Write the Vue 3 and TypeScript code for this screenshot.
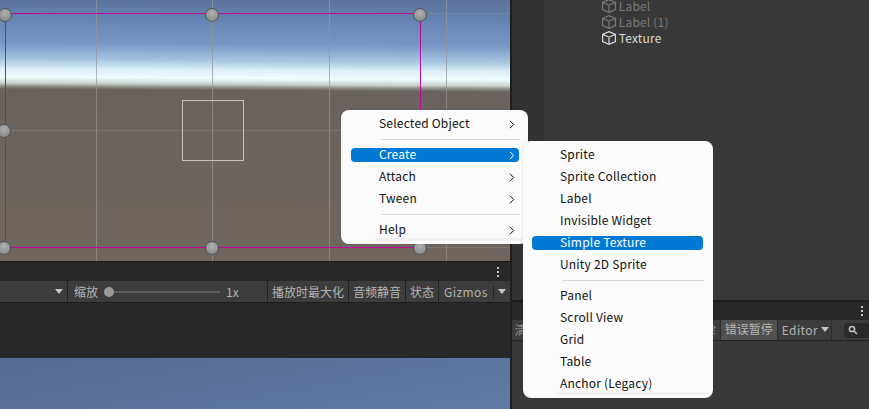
<script setup lang="ts">
type Entry = { label?: string; sep?: boolean; sub?: boolean; active?: boolean };

const mainMenu: Entry[] = [
  { label: 'Selected Object', sub: true },
  { sep: true },
  { label: 'Create', sub: true, active: true },
  { label: 'Attach', sub: true },
  { label: 'Tween', sub: true },
  { sep: true },
  { label: 'Help', sub: true },
];

const createMenu: Entry[] = [
  { label: 'Sprite' },
  { label: 'Sprite Collection' },
  { label: 'Label' },
  { label: 'Invisible Widget' },
  { label: 'Simple Texture', active: true },
  { label: 'Unity 2D Sprite' },
  { sep: true },
  { label: 'Panel' },
  { label: 'Scroll View' },
  { label: 'Grid' },
  { label: 'Table' },
  { label: 'Anchor (Legacy)' },
];

const gridX = [96, 212, 329, 446];
const gridY = [13, 130, 247];

const handles = [
  [5, 15], [212, 15], [420, 15],
  [4, 131], [420, 131],
  [4, 248], [212, 248], [420, 248],
];

const gameButtons = ['播放时最大化', '音频静音', '状态'];
const tree = [
  { name: 'Label', dim: true },
  { name: 'Label (1)', dim: true },
  { name: 'Texture', dim: false },
];
</script>

<template>
  <div class="editor">
    <section class="left">
      <div class="scene">
        <i v-for="x in gridX" :key="x" class="grid v" :style="{ left: x + 'px' }" />
        <i v-for="y in gridY" :key="y" class="grid h" :style="{ top: y + 'px' }" />
        <div class="rect" />
        <div class="square" />
        <i
          v-for="(h, i) in handles"
          :key="i"
          class="handle"
          :style="{ left: h[0] - 7 + 'px', top: h[1] - 7 + 'px' }"
        />
      </div>
      <div class="tabbar">
        <span class="dots"><b /><b /><b /></span>
      </div>
      <div class="toolbar">
        <div class="drop"><span class="caret" /></div>
        <div class="zoom">
          <span class="zoom-label">缩放</span>
          <span class="slider"><i /></span>
          <span class="zoom-val">1x</span>
        </div>
        <button v-for="b in gameButtons" :key="b" class="tool">{{ b }}</button>
        <button class="tool gizmos">Gizmos<em /><span class="caret" /></button>
      </div>
      <div class="gap" />
      <div class="game" />
    </section>

    <section class="right">
      <div class="hierarchy">
        <div class="gutter" />
        <ul class="tree">
          <li v-for="t in tree" :key="t.name" :class="{ dim: t.dim }">
            <svg width="16" height="16" viewBox="0 0 16 16" fill="none" stroke="currentColor" stroke-width="1.2">
              <path d="M8 1.6 14.4 4.4V11.6L8 14.4 1.6 11.6V4.4Z" />
              <path d="M1.6 4.4 8 7.2 14.4 4.4M8 7.2V14.4" />
            </svg>
            <span>{{ t.name }}</span>
          </li>
        </ul>
      </div>
      <div class="console-tabs">
        <span class="dots"><b /><b /><b /></span>
      </div>
      <div class="console-bar">
        <span class="cut first">清</span>
        <span class="cut second">除</span>
        <span class="pause">错误暂停</span>
        <span class="editor-btn">Editor<span class="caret" /></span>
        <span class="search">
          <svg width="10" height="10" viewBox="0 0 10 10" fill="none" stroke="#c4c4c4" stroke-width="1.5">
            <circle cx="4" cy="4" r="2.6" />
            <path d="M6 6 9 9" />
          </svg>
        </span>
      </div>
      <div class="console-body" />
    </section>

    <nav class="menu main">
      <template v-for="(e, i) in mainMenu" :key="i">
        <hr v-if="e.sep" />
        <div v-else class="item" :class="{ active: e.active }">
          <span>{{ e.label }}</span>
          <svg v-if="e.sub" width="6" height="9" viewBox="0 0 6 9" fill="none" stroke="currentColor" stroke-width="1">
            <path d="M1 .8 4.7 4.5 1 8.2" />
          </svg>
        </div>
      </template>
    </nav>

    <nav class="menu create">
      <template v-for="(e, i) in createMenu" :key="i">
        <hr v-if="e.sep" />
        <div v-else class="item" :class="{ active: e.active }">
          <span>{{ e.label }}</span>
        </div>
      </template>
    </nav>
  </div>
</template>

<style scoped>
.editor {
  position: relative;
  width: 869px;
  height: 409px;
  overflow: hidden;
  display: flex;
  background: #1e1e1e;
  font-family: "Noto Sans CJK SC", "Noto Sans", sans-serif;
  font-size: 12px;
}
.left {
  width: 511px;
  display: flex;
  flex-direction: column;
}
.right {
  flex: 1;
  margin-left: 2px;
  display: flex;
  flex-direction: column;
}

/* scene view */
.scene {
  position: relative;
  height: 261px;
  overflow: hidden;
  background: linear-gradient(
    180.35deg,
    #5a719a 0,
    #6583b0 20px,
    #7897c4 46px,
    #a5c4e0 62px,
    #dcf0f7 72px,
    #eefdfd 80px,
    #c8d2cd 86px,
    #8f908a 89px,
    #6a635d 92px,
    #6d645d 180px,
    #71675f 261px
  );
}
.grid {
  position: absolute;
  background: rgba(150, 150, 150, 0.7);
}
.grid.v {
  top: 0;
  bottom: 0;
  width: 1px;
}
.grid.h {
  left: 0;
  right: 0;
  height: 1px;
  background: rgba(150, 150, 150, 0.35);
}
.rect {
  position: absolute;
  left: 5px;
  top: 13px;
  width: 416px;
  height: 235px;
  box-sizing: border-box;
  border: 1px solid #c0089c;
}
.square {
  position: absolute;
  left: 182px;
  top: 100px;
  width: 60px;
  height: 59px;
  border: 1px solid #c4c1be;
}
.handle {
  position: absolute;
  width: 14px;
  height: 14px;
  box-sizing: border-box;
  border-radius: 50%;
  border: 1px solid #4d5157;
  background: radial-gradient(circle at 50% 35%, #b0b0b0, #8c8c8c 75%);
}
.handle::before {
  content: "";
  position: absolute;
  left: 5px;
  top: -2px;
  bottom: -2px;
  width: 2px;
  background: #15151a;
  z-index: -1;
}

/* bars under the scene */
.tabbar {
  height: 20px;
  box-sizing: border-box;
  border-top: 1px solid #1a1a1a;
  display: flex;
  justify-content: flex-end;
  align-items: center;
  padding-right: 11px;
  background: #282828;
}
.dots {
  display: flex;
  flex-direction: column;
  gap: 2px;
}
.dots b {
  width: 2px;
  height: 2px;
  background: #c4c4c4;
}
.toolbar {
  height: 22px;
  box-sizing: border-box;
  display: flex;
  gap: 1px;
  background: #232323;
  border-bottom: 1px solid #1e1e1e;
  color: #b4b4b4;
}
.drop {
  width: 67px;
  background: #3c3c3c;
  display: flex;
  justify-content: flex-end;
  align-items: center;
  padding-right: 4px;
  box-sizing: border-box;
}
.caret {
  display: inline-block;
  width: 0;
  height: 0;
  border-left: 4px solid transparent;
  border-right: 4px solid transparent;
  border-top: 5px solid #c4c4c4;
}
.zoom {
  width: 199px;
  background: #3c3c3c;
  display: flex;
  align-items: center;
  padding-left: 6px;
  box-sizing: border-box;
}
.zoom-label {
  width: 30px;
}
.slider {
  position: relative;
  width: 116px;
  height: 2px;
  background: #5a5a5a;
}
.slider i {
  position: absolute;
  left: 0;
  top: -4px;
  width: 10px;
  height: 10px;
  border-radius: 50%;
  background: #999;
}
.zoom-val {
  margin-left: 6px;
}
.tool {
  background: #3c3c3c;
  color: #b4b4b4;
  border: 0;
  padding: 0 4px;
  font: inherit;
  line-height: 20px;
  white-space: nowrap;
}
.gizmos {
  flex: 1;
  display: flex;
  align-items: center;
  text-align: left;
  padding-left: 5px;
  letter-spacing: 0.4px;
}
.gizmos em {
  width: 1px;
  height: 12px;
  margin: 0 4px 0 5px;
  background: #222;
}
.gap {
  height: 55px;
  background: #282828;
}
.game {
  flex: 1;
  background: linear-gradient(170deg, #556b92, #5f7aa4);
}

/* hierarchy */
.hierarchy {
  height: 300px;
  display: flex;
  background: #383838;
}
.gutter {
  width: 32px;
  background: #333;
}
.tree {
  list-style: none;
  margin: -2px 0 0;
  padding: 0 0 0 57px;
}
.tree li {
  height: 16px;
  display: flex;
  align-items: center;
  gap: 2px;
  color: #d8d8d8;
  letter-spacing: 0.2px;
}
.tree li span {
  line-height: 12px;
}
.tree li.dim {
  color: #787878;
}

/* console */
.console-tabs {
  height: 20px;
  background: #282828;
  border-top: 2px solid #1d1d1d;
  display: flex;
  justify-content: flex-end;
  align-items: center;
  padding-right: 7px;
  box-sizing: border-box;
}
.console-bar {
  position: relative;
  height: 21px;
  background: #3c3c3c;
  border-bottom: 1px solid #232323;
  box-sizing: border-box;
  color: #b4b4b4;
  display: flex;
  align-items: center;
  padding-left: 208px;
}
.cut {
  color: #8c8c8c;
  margin-bottom: 1px;
}
.cut.first {
  position: absolute;
  left: 3px;
}
.cut.second {
  position: absolute;
  left: 192px;
}
.pause {
  width: 58px;
  height: 100%;
  box-sizing: border-box;
  text-align: center;
  background: #515151;
  line-height: 18px;
  border-left: 1px solid #2c2c2c;
  border-right: 1px solid #2c2c2c;
}
.editor-btn {
  width: 54px;
  height: 100%;
  display: flex;
  align-items: center;
  gap: 3px;
  padding: 0 0 2px 4px;
  box-sizing: border-box;
  border-right: 1px solid #2c2c2c;
  letter-spacing: 0.4px;
}
.search {
  margin-left: 12px;
  width: 26px;
  height: 15px;
  background: #2a2a2a;
  border-radius: 4px 0 0 4px;
  display: flex;
  align-items: center;
  padding-left: 4px;
  box-sizing: border-box;
}
.console-body {
  flex: 1;
  background: #383838;
}

/* context menus */
.menu {
  position: absolute;
  box-sizing: border-box;
  padding-top: 3px;
  display: flex;
  flex-direction: column;
  background: #fbfbfb;
  border-radius: 8px;
  box-shadow: 0 0 0 1px rgba(0, 0, 0, 0.05);
  color: #111;
  letter-spacing: 0.2px;
}
.menu::after {
  content: "";
  position: absolute;
  bottom: 3px;
  height: 3px;
  background: #f2f2f2;
}
.menu.main {
  left: 341px;
  top: 110px;
  width: 187px;
  height: 134px;
}
.menu.main::after {
  left: 34px;
  right: 4px;
}
.menu.create {
  left: 523px;
  top: 141px;
  width: 190px;
  height: 257px;
}
.menu.create::after {
  left: 33px;
  right: 4px;
}
.item {
  height: 14px;
  margin: 4px 9px 4px 10px;
  padding: 0 4px 0 28px;
  display: flex;
  align-items: center;
  justify-content: space-between;
  border-radius: 4px;
  line-height: 14px;
  white-space: nowrap;
}
.item span {
  margin-bottom: 2px;
}
.item.active {
  background: #0078d4;
  color: #fff;
}
.menu.create .item {
  margin: 4px 10px 4px 9px;
}
hr {
  height: 1px;
  border: 0;
  margin: 4px 8px 4px 40px;
  background: #d8d8d8;
}
.menu.create hr {
  margin: 4px 9px 4px 39px;
}
</style>
